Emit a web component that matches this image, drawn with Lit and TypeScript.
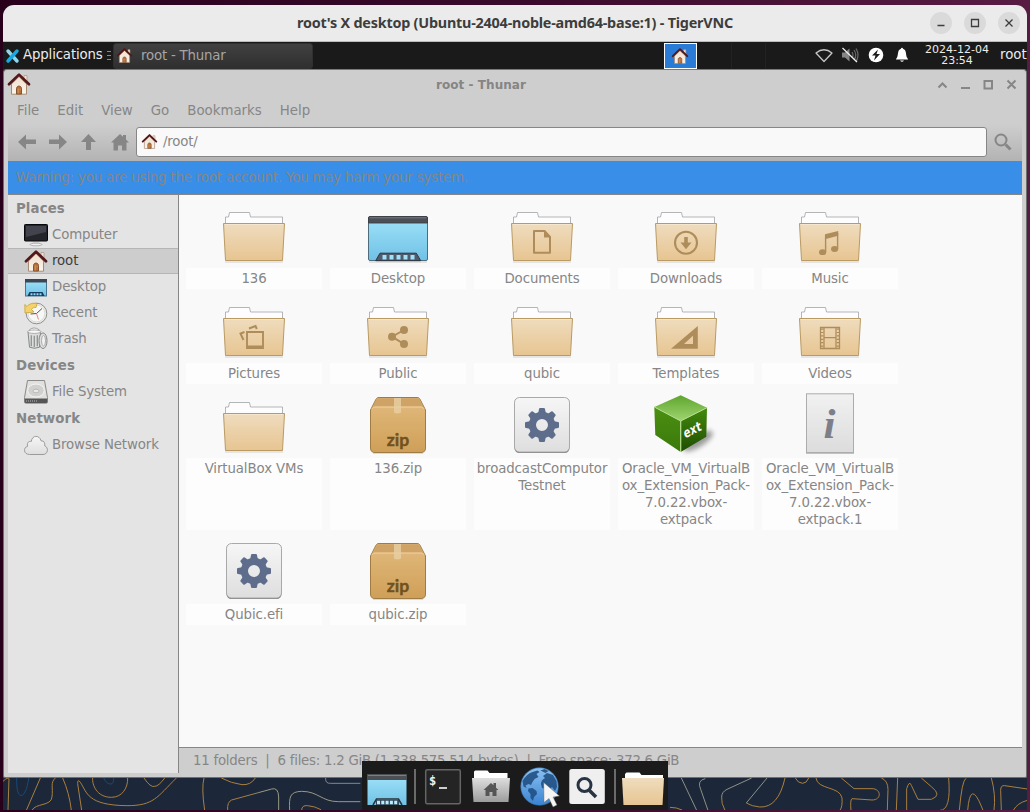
import { LitElement, html, svg, css, SVGTemplateResult } from "lit";
import { customElement, state } from "lit/decorators.js";

const house = svg`
  <path d="M16 2.5h3v7h-3z" fill="#efe3d3" stroke="#b59a82" stroke-width=".8"/>
  <path d="M3.5 11 11 3.5 18.5 11v10.2h-15z" fill="url(#wall)" stroke="#a58b76" stroke-width="1"/>
  <path d="M1 11.2 11 1.6l10 9.6" fill="none" stroke="#531719" stroke-width="2.7" stroke-linejoin="round" stroke-linecap="round"/>
  <path d="M8.5 21v-5.4c0-3.4 5-3.4 5 0V21z" fill="#b8713c" stroke="#7e4a25" stroke-width=".9"/>
  <path d="M10.2 20.5v-5M12.2 16v1" stroke="#d99a62" stroke-width=".9"/>`;

const folderBase = svg`
  <path d="M3 58.5h58v1H3z" fill="#000" opacity=".16"/>
  <path d="M3.5 22v-8h3l1-4.500h20l1 4.500h32v8z" fill="#fdfdfe" stroke="#9fa3a8" stroke-width=".8"/>
  <path d="M1.500 20.500h61l-2 37h-57z" fill="url(#folder)" stroke="#b99a63" stroke-width="1" stroke-linejoin="round"/>
  <path d="M2.800 21.500h58.400" stroke="#f7e8cf" stroke-width=".8"/>`;

const gearTeeth = [0, 45, 90, 135, 180, 225, 270, 315];

const emblems: Record<string, SVGTemplateResult> = {
  plain: svg``,
  documents: svg`<path d="M24 28h10.500l5.500 6v15.700H24z" fill="none" stroke="#af8d5b" stroke-width="2" stroke-linejoin="round"/><path d="M34 27v7.500h7z" fill="#af8d5b"/>`,
  downloads: svg`<circle cx="32" cy="39.700" r="11" fill="none" stroke="#af8d5b" stroke-width="2.100"/><path d="M30.200 34h3.600v5.500h3.700L32 46.200l-5.500-6.700h3.700z" fill="#af8d5b"/>`,
  music: svg`<path d="M27 31.200 40.200 28v4.800L27 36.200z" fill="#af8d5b"/><path d="M27.600 32v17M39.600 30v16" stroke="#af8d5b" stroke-width="1.400"/><ellipse cx="24.600" cy="49.200" rx="3.600" ry="2.900" fill="#af8d5b"/><ellipse cx="36.600" cy="46" rx="3.600" ry="2.900" fill="#af8d5b"/>`,
  pictures: svg`<path d="M25 34h16v16H25z" fill="none" stroke="#af8d5b" stroke-width="1.900"/><path d="M25 47.500h16v3H25z" fill="#af8d5b"/><path d="m22.500 34-4 1.500 3 6.500M27 30.500l6.500-2.500 1.300 3" fill="none" stroke="#af8d5b" stroke-width="2"/>`,
  share: svg`<path d="m38 32-12 6.700 12 7.300" fill="none" stroke="#af8d5b" stroke-width="2"/><circle cx="38" cy="32" r="4" fill="#af8d5b"/><circle cx="26" cy="38.700" r="4" fill="#af8d5b"/><circle cx="38" cy="46" r="4" fill="#af8d5b"/>`,
  templates: svg`<path fill-rule="evenodd" d="M43.800 28v22.800H17zM39 37.700 30 46h9z" fill="#af8d5b"/>`,
  videos: svg`<path d="M22.500 29.500h19v21h-19zM26 29.500v21M38 29.500v21M26 39.700h12" fill="none" stroke="#af8d5b" stroke-width="1.300"/><path d="M24.200 30.500v20M39.900 30.500v20" stroke="#af8d5b" stroke-width="2.400" stroke-dasharray="1.200 2.200"/>`,
};

const desktopIcon = svg`
  <path d="M3 58.600h58v1H3z" fill="#000" opacity=".18"/>
  <rect x="2.500" y="13.500" width="59" height="44" rx="1.500" fill="url(#sky)" stroke="#4d6c7c"/>
  <path d="M2.500 20v-5c0-1 .5-1.500 1.500-1.500h56c1 0 1.500.5 1.500 1.500v5z" fill="#4c4f56" stroke="#3b3e44" stroke-width=".9"/>
  <path d="M3.500 14.800h57" stroke="#85878c" stroke-width=".8"/>
  <path d="m9.700 57.700 4.300-7.500h36.300l4.400 7.500z" fill="#4f5a6b" stroke="#2d3541"/>
  <path d="M16.500 52h4v4.500h-4zm7 0h4v4.500h-4zm7 0h4v4.500h-4zm7 0h4v4.500h-4zm7 0h4v4.500h-4z" fill="#a4e0f5"/>`;

const zipIcon = svg`
  <path d="M7 60.500h50" stroke="#000" opacity=".12"/>
  <path d="M4.500 17 10 6.200c.8-1.300 1.600-1.700 3-1.700h38c1.400 0 2.200.4 3 1.700L59.500 17v38c0 3-1.500 4.500-4.500 4.500H9c-3 0-4.500-1.500-4.500-4.500z" fill="url(#box)" stroke="#a07c45"/>
  <path d="M5.500 16 10.600 6.600c.6-1 1.200-1.300 2.400-1.300h38c1.200 0 1.800.3 2.400 1.300L58.500 16c-.6-1.500-1.500-2.200-3-2.200h-47c-1.500 0-2.400.7-3 2.200z" fill="#cfa366"/>
  <path d="M6 15.800c.7-1.300 1.500-1.800 3-1.800h46c1.500 0 2.300.5 3 1.800" fill="none" stroke="#f0d3a2"/>
  <path d="M28 5h7v14.500q-3.500 2-7 0z" fill="#e8cfa4" opacity=".8"/>
  <text x="32" y="53" text-anchor="middle" textLength="22.500" lengthAdjust="spacingAndGlyphs" class="ziptext">zip</text>`;

const gearIcon = svg`
  <rect x="4.500" y="4.900" width="55" height="55.200" rx="5" fill="#7b7b7b"/>
  <rect x="4.500" y="4.500" width="55" height="54.500" rx="5" fill="url(#plate)" stroke="#a9a9a9"/>
  <g transform="translate(32 32)">
    ${gearTeeth.map((a) => svg`<path transform="rotate(${a})" d="M-4-11-3-16q.2-1 1-1h4q.8 0 1 1L4-11z" fill="#5d6d8b"/>`)}
    <circle r="9.600" fill="none" stroke="#5d6d8b" stroke-width="7.200"/>
  </g>`;

const cubeIcon = svg`
  <ellipse cx="44" cy="48" rx="17" ry="6" transform="rotate(-32 44 48)" fill="#000" opacity=".38" filter="url(#soft)"/>
  <path d="M26.700 2.300 53 14.700 26.700 28 .3 14z" fill="url(#cubetop)"/>
  <path d="M.3 14 26.700 28v31L1.300 42z" fill="url(#cubeleft)"/>
  <path d="M53 14.700 26.700 28v31l25.600-15.300z" fill="url(#cuberight)"/>
  <path d="M.3 14 26.700 28 53 14.700" fill="none" stroke="#b4df8e" stroke-width="1"/>
  <path d="M26.700 28v31" stroke="#b4df8e" stroke-width="1.200"/>
  <text transform="translate(31 45.500) rotate(-27) skewX(-12)" textLength="19" lengthAdjust="spacingAndGlyphs" class="exttext">ext</text>`;

const infoIcon = svg`
  <path d="M8 59.500h48v1H8z" fill="#8b8b8b"/>
  <rect x="8.500" y=".8" width="47" height="58.700" fill="url(#plate2)" stroke="#acacac"/>
  <text x="31.500" y="44.500" text-anchor="middle" class="itext">i</text>`;

const folderIcon = (e: string) => svg`${folderBase}${emblems[e]}`;

interface FileItem { name: string; icon: SVGTemplateResult; }

const files: FileItem[] = [
  { name: "136", icon: folderIcon("plain") },
  { name: "Desktop", icon: desktopIcon },
  { name: "Documents", icon: folderIcon("documents") },
  { name: "Downloads", icon: folderIcon("downloads") },
  { name: "Music", icon: folderIcon("music") },
  { name: "Pictures", icon: folderIcon("pictures") },
  { name: "Public", icon: folderIcon("share") },
  { name: "qubic", icon: folderIcon("plain") },
  { name: "Templates", icon: folderIcon("templates") },
  { name: "Videos", icon: folderIcon("videos") },
  { name: "VirtualBox VMs", icon: folderIcon("plain") },
  { name: "136.zip", icon: zipIcon },
  { name: "broadcastComputor\nTestnet", icon: gearIcon },
  { name: "Oracle_VM_VirtualB\nox_Extension_Pack-\n7.0.22.vbox-\nextpack", icon: cubeIcon },
  { name: "Oracle_VM_VirtualB\nox_Extension_Pack-\n7.0.22.vbox-\nextpack.1", icon: infoIcon },
  { name: "Qubic.efi", icon: gearIcon },
  { name: "qubic.zip", icon: zipIcon },
];

const sideIcons: Record<string, SVGTemplateResult> = {
  computer: svg`<path d="M9 18h6l1 3H8z" fill="#d8d8d8"/><ellipse cx="12" cy="21.500" rx="6" ry="1.300" fill="#f2f2f2" stroke="#9a9a9a" stroke-width=".7"/><rect x=".5" y="1.500" width="23" height="16.500" rx=".8" fill="#24242b" stroke="#08080a"/><path d="M2 3h20v6L2 14z" fill="#55555f" opacity=".65"/>`,
  home: svg`<g transform="translate(1 1)">${house}</g>`,
  desktop: svg`<g transform="translate(0 -1)"><rect x="1.500" y="5.500" width="21" height="16.500" fill="url(#sky)" stroke="#44748e"/><path d="M1 5h22v3.500H1z" fill="#3c4654"/><path d="m3.500 22 2-4h13l2 4z" fill="#173a5e"/><path d="M6.500 20.200h11" stroke="#8bd9f7" stroke-width="2" stroke-dasharray="2 1"/></g>`,
  recent: svg`<circle cx="12.500" cy="12.500" r="10.300" fill="#eeeeec" stroke="#8d8e8a"/><circle cx="12.500" cy="12.500" r="8.400" fill="#f7f7f6" stroke="#cfcfcd" stroke-width=".7"/><path d="m12.500 12.500 5.500-5M12.500 12.500 6.500 13" stroke="#555" stroke-width="1"/><path d="m12.500 12.500 2 6" stroke="#dd6b6b" stroke-width=".8"/><path d="M.8 3.500 3 5.500C5 2.800 9 1.500 13 2.600L12 6.500c-2-.3-3.500.3-4.500 2L10 11l-9 1z" fill="#f2d36b" stroke="#c79f35" stroke-width=".8"/>`,
  trash: svg`<g transform="translate(0 -.8)"><path d="M5.500 6V3.500Q10 0 15 3.500V6" fill="#fafafa" stroke="#999" stroke-width=".9"/><path d="M4 5.500h12.500L15.500 21q-5 2.200-10 0z" fill="#dcdedd" stroke="#858886"/><ellipse cx="10.300" cy="5.500" rx="6.700" ry="1.700" fill="#f8f8f8" stroke="#999" stroke-width=".8"/><path d="M7.300 9v11M10.300 9.500V21M13.300 9v11" stroke="#8f9190" stroke-width="1.300"/><ellipse cx="19" cy="14.500" rx="4" ry="7.800" fill="#dedfde" stroke="#858886"/><ellipse cx="19.500" cy="14.500" rx="2" ry="5.300" fill="#f2f2f2" stroke="#9b9b9b" stroke-width=".8"/></g>`,
  disk: svg`<path d="M3.500.5h17l3 17v4.500q0 1.200-1.200 1.200H1.700Q.5 23.200.5 22v-4.500z" fill="#e0e0df" stroke="#8a8a88"/><path d="M.8 18.500h22.400V22q0 1-1 1H1.800q-1 0-1-1z" fill="#555"/><path d="M2 21h12" stroke="#999" stroke-width="1.500" stroke-dasharray="1 1"/><ellipse cx="12" cy="10.500" rx="8.300" ry="6.500" fill="#d0d0cf" stroke="#f4f4f4"/><ellipse cx="12" cy="11" rx="3" ry="1.800" fill="#e8e8e8" stroke="#aaa" stroke-width=".7"/>`,
  cloud: svg`<path d="M5.500 21.500C-.5 21.500-1 14.500 3.600 13.300 2.500 9.300 5.500 7.800 7.300 8.500 7.800 2 15.500 1.500 17 7.800c3.200-.3 4.300 2.500 3.700 5 4.300 1.700 3.300 8.700-1.700 8.700z" fill="url(#plate)" stroke="#9b9b9b"/>`,
};

const places = [
  { title: "Places", rows: [["computer", "Computer"], ["home", "root"], ["desktop", "Desktop"], ["recent", "Recent"], ["trash", "Trash"]] },
  { title: "Devices", rows: [["disk", "File System"]] },
  { title: "Network", rows: [["cloud", "Browse Network"]] },
];

@customElement("app-root")
export class AppRoot extends LitElement {
  @state() private selected = "root";

  static styles = css`
    :host { display: block; position: relative; width: 1030px; height: 812px; overflow: hidden; box-sizing: border-box;
      padding: 5px 3px 2px; background: linear-gradient(90deg, #29001c, #3a0a2a 50%, #581c42);
      font: 13.333px/17px "DejaVu Sans", sans-serif; color: #868686; }
    * { box-sizing: border-box; }
    svg { display: block; flex: none; overflow: visible; }
    .defs { position: absolute; width: 0; height: 0; }
    .vnc { display: flex; flex-direction: column; height: 805px; border-radius: 11px 11px 0 0; overflow: hidden; background: #1c2739; }
    .vbar { height: 37px; flex: none; background: #ebebeb; border-bottom: 1px solid #bcbcbc; display: grid; grid-template-columns: 1fr auto 1fr; align-items: center; }
    .vtitle { grid-column: 2; font: bold 14.4px/20px "Noto Sans", sans-serif; letter-spacing: -.22px; color: #3d3d3d; white-space: nowrap; width: 436px; padding-bottom: 1px; }
    .vbtns { justify-self: end; display: flex; gap: 12px; padding-right: 7px; }
    .panel { height: 27px; flex: none; background: #1a1a1a; display: flex; align-items: center; color: #ececec; white-space: nowrap; }
    .apps { display: flex; align-items: center; gap: 4px; padding-left: 3px; width: 110px; flex: none; }
    .apps span { width: 80px; letter-spacing: -.15px; padding-bottom: 2px; }
    .task { width: 200px; height: 26px; flex: none; display: flex; align-items: center; gap: 9px; padding: 0 0 1px 3px; border-radius: 3px; background: linear-gradient(#414141, #2f2f2f); color: #a5a5a5; border: 1px solid #303030; }
    .task span { letter-spacing: -.2px; }
    .pager { display: flex; margin-left: 351px; height: 26px; flex: none; }
    .ws { width: 34px; border-right: 1px solid #222; }
    .ws.on { width: 33px; margin-right: 1px; background: #2a7bd5; border: 1px solid #fff; display: flex; align-items: center; justify-content: center; padding-right: 1px; }
    .tray { display: flex; align-items: center; gap: 8px; margin-left: 49px; padding-bottom: 1px; flex: none; }
    .clock { width: 66px; margin-left: 13px; padding-bottom: 1px; flex: none; font-size: 11px; line-height: 11px; text-align: center; }
    .user { margin-left: 10px; padding-bottom: 2px; flex: none; }
    .thunar { height: 709px; flex: none; background: #cecece; border: 1px solid #6f6f6f; border-top-color: #7a7a7a; border-radius: 4px 4px 2px 2px; padding: 0 4px 4px; display: flex; flex-direction: column; }
    .tbar { height: 28px; flex: none; display: grid; grid-template-columns: 1fr auto 1fr; align-items: center; }
    .tbar b { font-size: 12px; letter-spacing: .05px; color: #858585; margin-right: 68px; padding-top: 2px; }
    .wm { justify-self: end; margin: 2px 3px 0 0; }
    .menu { height: 26px; flex: none; display: flex; gap: 18px; align-items: center; padding: 0 0 2px 9px; }
    .tool { height: 37px; flex: none; display: flex; align-items: center; padding: 0 9px 2px; background: linear-gradient(#cecece, #b3b3b3); }
    .nav { width: 119px; flex: none; }
    .entry { width: 851px; height: 30px; flex: none; display: flex; align-items: center; gap: 6px; padding-left: 5px; border: 1px solid #868686; border-radius: 3px; background: #f9f9f9; }
    .entry span { letter-spacing: -.2px; padding-bottom: 1px; }
    .find { margin-left: 7px; }
    .warn { height: 34px; flex: none; background: #398ee7; border-bottom: 1px solid #868686; padding: 8px 8px 0; white-space: nowrap; letter-spacing: -.17px; }
    .body { flex: 1; min-height: 0; display: flex; }
    .side { width: 171px; flex: none; background: #e4e4e4; border-right: 1px solid #868686; }
    .head { height: 27px; padding: 5px 8px 0; font-weight: bold; letter-spacing: .1px; }
    .row { height: 26px; display: flex; align-items: center; gap: 4px; padding-left: 16px; white-space: nowrap; letter-spacing: -.12px; }
    .row span { padding-bottom: 1px; }
    .row.on { background: #cdcdcd; box-shadow: inset 0 1px #b5b5b5, inset 0 -1px #b5b5b5; color: #3c3c3c; }
    .main { flex: 1; display: flex; flex-direction: column; }
    .grid { flex: 1; background: #f9f9f9; border-bottom: 1px solid #868686; padding: 8px 7px; display: grid; grid-template-columns: repeat(5, 136px); column-gap: 8px; row-gap: 9px; align-content: start; }
    .item { display: flex; flex-direction: column; align-items: center; gap: 1px; }
    .label { flex: 1; align-self: stretch; padding: 2px 0; background: #fdfdfd; text-align: center; white-space: pre; letter-spacing: -.1px; }
    .status { height: 25px; flex: none; padding: 4px 14px; white-space: pre; letter-spacing: -.25px; }
    .dock { position: absolute; left: 362px; top: 761px; width: 306px; height: 49px; background: #1b1b1b; }
    .ziptext { font: bold 17.500px "Lato", sans-serif; fill: #6f5221; stroke: #6f5221; stroke-width: .4; }
    .exttext { font: bold 13px "DejaVu Sans", sans-serif; fill: #fff; }
    .itext { font: italic bold 43px "Liberation Serif", serif; fill: #7c7e89; }
    .term { font: bold 12px "DejaVu Sans Mono", monospace; fill: #f2f2f2; }
  `;

  private defs() {
    const g = (id: string, a: string, b: string) => svg`<linearGradient id=${id} x1="0" y1="0" x2="0" y2="1"><stop offset="0" stop-color=${a}/><stop offset="1" stop-color=${b}/></linearGradient>`;
    return html`<svg class="defs"><defs>
      ${g("wall", "#f0dfcd", "#fbf5ec")}${g("folder", "#efdcbe", "#e7c591")}${g("sky", "#a0e3f9", "#70c1e6")}
      ${g("box", "#e2bb7e", "#cf9f58")}${g("plate", "#f6f6f6", "#dedede")}${g("plate2", "#f1f1f1", "#dcdcdc")}
      ${g("cubetop", "#5fa52e", "#9fd570")}${g("cubeleft", "#4b8f12", "#3a7a0b")}${g("cuberight", "#438a0c", "#1f4d04")}
      ${g("gray", "#dedede", "#9c9c9c")}${g("globe", "#8cc2f0", "#3a83d2")}
      <filter id="soft" x="-50%" y="-50%" width="200%" height="200%"><feGaussianBlur stdDeviation="2.500"/></filter>
    </defs></svg>`;
  }

  private wallpaper() {
    return html`<svg width="1024" height="32" viewBox="0 0 1024 32"><g fill="none" stroke="#aa8040" stroke-width="3" transform="scale(.33333)">
      <g transform="translate(-9 -144)">
        <path d="M9 154q15-14 18-8l-3 95M121 144 79 241M96 241c10-22 58-12 60-40 4-30-6-42 10-57M188 144q20 45 26 97M245 241l-12-80q0-16 8-4c20 30 20 69 140 70 80 0 90-25 148-83M278 144c-2 20 12 58 56 58 34 0 50-30 49-58M432 144q20 30 32 25 12 0 30-25M612 144q-8 30 2 97M664 144q30 16 62 20 26 2 40-20M683 241q-2-25 12-31l80-22M905 241q0-16 18-14 22 2 40 12"/>
        <path d="m775 188 40-11q20-6 21 24v40M869 241c-2-40 0-56 36-57 50 0 60 31 110 31h66" stroke="#999983"/>
        <path d="M50 144c-2 80 30 60 36 0M311 144q10 20 22 18 8 0 8-18" stroke="#174a78"/>
        <path d="M977 144v4q0 12 14 12h90" stroke="#7e8990"/>
      </g>
      <g transform="translate(2001 -144)">
        <path d="M0 232q20 0 36 8M165 241q-12-22-10-40M345 144q-20 90-76 87-24-2-40-12M376 144q8 16 22 16 12 0 18-16M438 144c4 36 72 24 78 60q2 25-6 37M514 144l38 32h54c28 0 30 34 0 34l-60-4q-6 4-3 35M634 144q20 8 20 34l-2 63M683 144l-4 97M710 241v-65q8-26 14-10l20 42h40q34-12 0-38l-30-26M836 144q8 97-26 97M868 241q8-90 20-96M893 241q8-94 42-10l4 10M964 144q14 50 8 97M994 241l-2-60q0-16 12-14l68 10M1030 241q12-22 42-30"/>
        <path d="M34 144 80 241M106 146q-26 5-14 32l22 63M155 201q0-15 16-23l74-34M291 144l-62 75" stroke="#8d9284"/>
      </g></g></svg>`;
  }

  private dock() {
    return html`<div class="dock"><svg width="306" height="49" viewBox="362 761 306 49">
      <rect x="367.500" y="775" width="39" height="30" fill="url(#sky)"/><path d="M367 774h40v6h-40z" fill="#4c5055"/><path d="M368 775.500h38" stroke="#7b7f83"/>
      <path d="m373 805 3.500-6h22l3.500 6" fill="none" stroke="#29333d" stroke-width="1.500"/><path d="M376 802.500h23" stroke="#344758" stroke-width="5"/><path d="M377 802.500h21" stroke="#b5edff" stroke-width="3.500" stroke-dasharray="3 1.300"/>
      <path d="M415 769v35M615 769v35" stroke="#858585" stroke-width="1.500"/>
      <rect x="425.700" y="769.700" width="34.600" height="34" rx="1.500" fill="#242424" stroke="#656565" stroke-width="1.500"/>
      <text x="429" y="785" class="term">$</text><path d="M439 788h8" stroke="#eee" stroke-width="1.700"/>
      <path d="M474 778v-6q0-1.500 1.500-1.500h12l2 2.500h18v6z" fill="#fff"/><path d="M472 778h38l-1.500 24h-35z" fill="url(#gray)"/>
      <path d="m483.500 790 7.500-7 2.500 2.300V783h2.500v4.700l2.500 2.300h-2v6h-4v-4h-3v4h-4v-6z" fill="#555"/>
      <circle cx="539.500" cy="786.500" r="18.700" fill="url(#globe)" stroke="#3c7cc0" stroke-width=".6"/>
      <path d="M522.500 781q4-7 10-9l5-1.500 2 1.500-3 2 2 3-4 2-2 3-1.500 3-2.500-1-3 1.500 1 2.500-3-1.500zM528.500 788.500l4-.5 4 3 .5 3-3 3-1 4-2.500-3v-4l-2.500-3zM540.500 770.500l4-1.500 4 2-3 2zM541 784q0-4 4-6l-2-2 4-3 6 2 3.500 6 .5 6-2 4-3-4-3 3-3-1-4-1z" fill="#1f4c7f" opacity=".88"/>
      <rect x="569.300" y="769" width="35.500" height="35" rx="2.500" fill="#efefef"/><circle cx="584.500" cy="785" r="6.500" fill="none" stroke="#293443" stroke-width="3"/><path d="m589 790 7 7" stroke="#293443" stroke-width="3.500"/>
      <path d="M625 779v-5l1.500-1.500h13l2 2.500H663v4z" fill="#fff"/><path d="M622 778h42l-1.500 27h-39z" fill="url(#folder)"/>
      <path d="m543.700 782.500.3 20 5-4 4 8.500 4-2-4-8 6.500-1z" fill="#f5f5f5" stroke="#555" stroke-width=".4"/>
    </svg></div>`;
  }

  private small(size: number) {
    return html`<svg width=${size} height=${size} viewBox="0 0 22 22">${house}</svg>`;
  }

  render() {
    return html`${this.defs()}
    <div class="vnc">
      <div class="vbar">
        <div class="vtitle">root's X desktop (Ubuntu-2404-noble-amd64-base:1) - TigerVNC</div>
        <div class="vbtns">${["M7.500 13.500h7", "M7.500 7.500h7v7h-7z", "m7.500 7.500 7 7m0-7-7 7"].map((d) => html`<svg width="22" height="22"><circle cx="11" cy="11" r="11" fill="#dadada"/><path d=${d} fill="none" stroke="#3d3d3d" stroke-width="1.300"/></svg>`)}</div>
      </div>
      <div class="panel">
        <div class="apps">
          <svg width="13" height="14"><path d="m2 2 9 10" stroke="#8ed6ee" stroke-width="3.500" stroke-linecap="round"/><path d="M11 2 2 12" stroke="#18a8df" stroke-width="3.500" stroke-linecap="round"/></svg>
          <span>Applications</span>
          <svg width="4" height="10"><path d="M0 .5h4M0 4.500h4M0 8.500h4" stroke="#888"/></svg>
        </div>
        <div class="task">${this.small(15)}<span>root - Thunar</span></div>
        <div class="pager"><div class="ws on">${this.small(16)}</div><div class="ws"></div><div class="ws"></div></div>
        <div class="tray">
          <svg width="18" height="18"><path d="M9 15.500 1 7q8-6.500 16 0z" fill="none" stroke="#c4c4c4" stroke-width="1.300" stroke-linejoin="round"/></svg>
          <svg width="18" height="18"><path d="M1 6.500h3l4.500-4v13L4 11.500H1z" fill="#858585"/><path d="M11 6q2 3 0 6M13 4q3.500 5 0 10M15 2.500q4 6.500 0 13" fill="none" stroke="#666" stroke-width="1.300"/><path d="m1.500 2 14.500 14" stroke="#eee" stroke-width="1.300"/></svg>
          <svg width="18" height="18"><circle cx="9" cy="9" r="7.300" fill="#fff"/><path d="m11 3.500-6 6h3.500L7 14.500l6-6.500H9.500z" fill="#1a1a1a"/></svg>
          <svg width="18" height="18"><path d="M9 1.700q1 0 1 1C14 4 12.500 9 14 11.500l1.200 2H2.800l1.200-2C5.500 9 4 4 8 2.700q0-1 1-1z" fill="#fff"/><path d="M7 14.500h4q-2 2.500-4 0z" fill="#fff"/></svg>
        </div>
        <div class="clock">2024-12-04<br />23:54</div>
        <div class="user">root</div>
      </div>
      <div class="thunar">
        <div class="tbar">
          ${this.small(22)}<b>root - Thunar</b>
          <svg class="wm" width="82" height="16" viewBox="937 77 82 16"><path d="m938.500 87.500 4-4 4 4M961 88h9M984.500 81h7.500v7.500h-7.500zM1007.500 80.500l8 8m0-8-8 8" fill="none" stroke="#868686" stroke-width="2"/></svg>
        </div>
        <div class="menu">${["File", "Edit", "View", "Go", "Bookmarks", "Help"].map((m) => html`<span>${m}</span>`)}</div>
        <div class="tool">
          <svg class="nav" width="119" height="20" viewBox="17 132 119 20"><path d="m18 142 8-7.500v5h10v4.500H26v5.500zM67 142l-8-7.500v5H49v4.500h10v5.500zM88.500 134l7.500 8h-5v8h-5v-8h-5zM111 142.500l9-8.500 3 2.700V135h3v4.500l3 3h-2.500v8h-4.500v-5h-4v5h-4.500v-8z" fill="#868686"/></svg>
          <div class="entry">${this.small(15)}<span>/root/</span></div>
          <svg class="find" width="18" height="18"><circle cx="7" cy="7" r="5.500" fill="none" stroke="#868686" stroke-width="2"/><path d="m11.500 11.500 5 5" stroke="#868686" stroke-width="3"/></svg>
        </div>
        <div class="warn">Warning: you are using the root account. You may harm your system.</div>
        <div class="body">
          <div class="side">${places.map((s) => html`<div class="head">${s.title}</div>${s.rows.map(([icon, name]) => html`
            <div class="row ${name === this.selected ? "on" : ""}" @click=${() => (this.selected = name)}><svg width="24" height="24">${sideIcons[icon]}</svg><span>${name}</span></div>`)}`)}
          </div>
          <div class="main">
            <div class="grid">${files.map((f) => html`<div class="item"><svg width="64" height="64">${f.icon}</svg><div class="label">${f.name}</div></div>`)}</div>
            <div class="status">11 folders  |  6 files: 1.2 GiB (1 338 575 514 bytes)  |  Free space: 372.6 GiB</div>
          </div>
        </div>
      </div>
      ${this.wallpaper()}
    </div>
    ${this.dock()}`;
  }
}
